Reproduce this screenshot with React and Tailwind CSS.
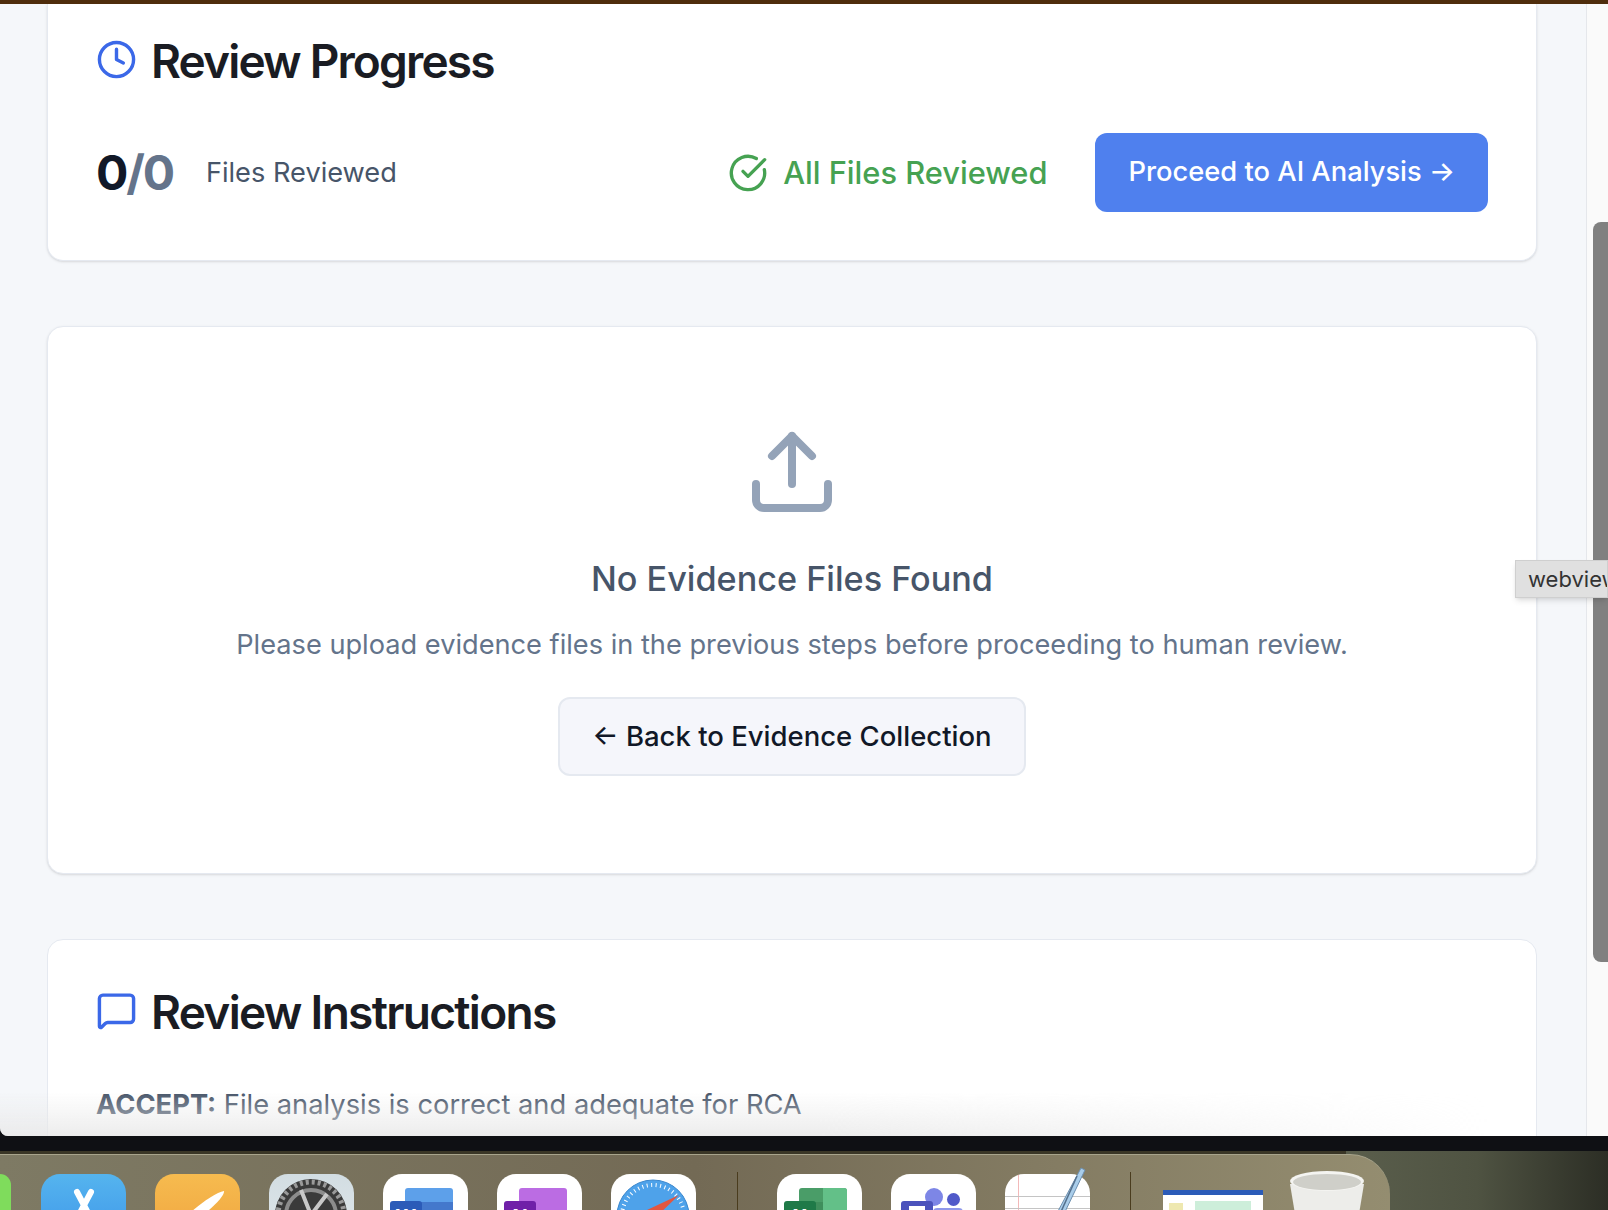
import { Clock, CircleCheckBig, Upload, MessageSquare } from 'lucide-react'

const sans = { fontFamily: 'Inter, sans-serif' }

function DockTile({ className = 'bg-white', children }) {
  return (
    <div className={`w-[85px] h-[85px] shrink-0 rounded-[19px] overflow-hidden relative ${className}`}>
      {children}
    </div>
  )
}

// Word / OneNote / Excel share the same tile: sheet behind, letter block in front
function OfficeIcon({ top, bottom, side, front, letter }) {
  return (
    <DockTile>
      <div className="absolute left-[22px] top-[14px] w-[48px] h-[50px] rounded-[3px] overflow-hidden" style={{ background: top }}>
        <div className="absolute left-0 right-0 top-[14px] bottom-0" style={{ background: bottom }} />
        {side && <div className="absolute left-[24px] right-0 top-0 bottom-0" style={{ background: side }} />}
      </div>
      <div className="absolute left-[7px] top-[27px] w-[32px] h-[32px] rounded-[3px] text-white text-[20px] font-bold leading-[32px] text-center" style={{ background: front }}>
        {letter}
      </div>
    </DockTile>
  )
}

function Dock() {
  return (
    <div className="h-[59px] bg-[#3a3626] overflow-hidden relative shrink-0">
      <div className="absolute inset-y-0 right-0 w-[262px] bg-gradient-to-r from-[#5a5e4c] via-[#4f5342] to-[#2c2e25]" />
      <div className="h-[56px] mt-[3px] w-[1390px] rounded-tr-[40px] border-t border-[#a8a48c] bg-gradient-to-r from-[#7e7a64] via-[#736a55] to-[#948d70] pt-[19px] flex relative">
        <div className="w-[11px] h-[85px] rounded-r-[12px] bg-[#7fdc5c] shrink-0" />
        <div className="ml-[30px] flex gap-[29px]">
          <DockTile className="bg-gradient-to-b from-[#55b4ee] to-[#3a8fe8]">
            <svg viewBox="0 0 85 85" className="absolute inset-0 w-full h-full">
              <path d="M36 18 L54 52 M50 18 L32 52" stroke="#fff" strokeWidth="6" strokeLinecap="round" />
            </svg>
          </DockTile>
          <DockTile className="bg-gradient-to-b from-[#f6bb4f] to-[#ee9f3b]">
            <svg viewBox="0 0 85 85" className="absolute inset-0 w-full h-full">
              <path d="M69 17 C70 22 54 38 40 46 L34 40 C44 30 62 18 69 17 Z" fill="#fff" />
            </svg>
          </DockTile>
          <DockTile className="bg-gradient-to-b from-[#d2dde2] to-[#e4eaed]">
            <svg viewBox="0 0 85 85" className="absolute inset-0 w-full h-full">
              <circle cx="42" cy="41" r="36" fill="#3a3a3a" />
              <circle cx="42" cy="41" r="33" fill="none" stroke="#9a9a9a" strokeWidth="5" strokeDasharray="3 3" />
              <circle cx="42" cy="41" r="25" fill="none" stroke="#8c8c8c" strokeWidth="4" />
              <path d="M42 41 L32 16 M42 41 L58 20" stroke="#c8c8c8" strokeWidth="4" />
            </svg>
          </DockTile>
          <OfficeIcon top="#5da0ea" bottom="#4478cc" front="#2b5bb8" letter="W" />
          <OfficeIcon top="#bb6ce3" bottom="#bb6ce3" front="#7020a8" letter="N" />
          <DockTile>
            <svg viewBox="0 0 85 85" className="absolute inset-0 w-full h-full">
              <circle cx="42" cy="42" r="36" fill="#4ea2ea" stroke="#3a86cc" strokeWidth="1" />
              <circle cx="42" cy="42" r="31" fill="none" stroke="#fff" strokeWidth="4" strokeDasharray="1 3.5" />
              <path d="M68 21 L36 36 L44 44 Z" fill="#e2563f" />
            </svg>
          </DockTile>
        </div>
        <div className="ml-[41px] w-px h-[40px] mt-[-2px] bg-[#4a3c1e] shrink-0" />
        <div className="ml-[39px] flex gap-[29px]">
          <OfficeIcon top="#4a9d68" bottom="#3f8f5c" side="#63c088" front="#1f7a48" letter="X" />
          <DockTile>
            <div className="absolute left-[34px] top-[14px] w-[18px] h-[18px] rounded-full bg-[#7d86e6]" />
            <div className="absolute left-[56px] top-[19px] w-[13px] h-[13px] rounded-full bg-[#5059c9]" />
            <div className="absolute left-[42px] top-[34px] w-[30px] h-[30px] rounded-[4px] bg-[#8f97ea]" />
            <div className="absolute left-[10px] top-[27px] w-[32px] h-[32px] rounded-[3px] bg-[#4b53bc] pt-[5px] pl-[8px]">
              <div className="w-[16px] h-[8px] bg-white" />
            </div>
          </DockTile>
          <div className="w-[85px] h-[85px] shrink-0 relative">
            <div className="absolute inset-0 rounded-[19px] bg-white overflow-hidden">
              <div className="absolute left-[13px] inset-y-0 w-px bg-[#f3b9b9]" />
              <div className="absolute inset-x-0 top-[22px] h-px bg-[#c4c4c4]" />
              <div className="absolute inset-x-0 top-[34px] h-px bg-[#c4c4c4]" />
            </div>
            <svg viewBox="0 0 85 60" className="absolute left-0 top-[-10px] w-[85px] h-[60px] overflow-visible">
              <path d="M76 4 L80 6 L58 52 L52 49 Z" fill="#a9cdea" stroke="#6d8fae" strokeWidth="1" />
              <path d="M72 12 L55 50" stroke="#54708c" strokeWidth="1.5" />
            </svg>
          </div>
        </div>
        <div className="ml-[40px] w-px h-[40px] mt-[-2px] bg-[#4a3c1e] shrink-0" />
        <div className="ml-[32px] w-[100px] h-[60px] mt-[16px] bg-white shrink-0 border-t-[5px] border-[#2b5bb8] flex">
          <div className="w-[14px] mt-[8px] ml-[6px] h-[14px] bg-[#eee8b0]" />
          <div className="ml-[12px] mt-[6px] w-[56px] h-[14px] bg-[#cdeeda]" />
        </div>
        <svg viewBox="0 0 76 56" className="ml-[26px] mt-[-4px] w-[76px] h-[56px] shrink-0">
          <path d="M1 14 L8 56 L68 56 L75 14 Z" fill="#ededea" />
          <ellipse cx="38" cy="11" rx="37" ry="10" fill="#f4f4f1" />
          <ellipse cx="38" cy="12" rx="34" ry="8" fill="#cfcfc9" />
        </svg>
      </div>
    </div>
  )
}

export default function App() {
  return (
    <div className="h-screen w-full bg-[#0f1014] flex flex-col overflow-hidden" style={sans}>
      <div className="h-1 bg-[#4f2d0c] shrink-0" />
      <div className="h-[1132px] shrink-0 flex overflow-hidden rounded-bl-[8px] relative bg-[#f5f7fa]">
        <main className="flex-1 min-w-0 pl-[47px] pr-[49px] overflow-hidden flex flex-col gap-[65px]">
          {/* Review Progress */}
          <section className="shrink-0 bg-white rounded-b-[16px] border-x border-b border-[#e5e9f0] shadow-sm pl-[48px] pr-[48px] h-[257px]">
            <div className="flex items-center gap-[14px] pt-[27px]">
              <Clock size={41} strokeWidth={2} className="text-[#3b68e8] shrink-0 mb-[3px]" />
              <h2 className="text-[46px] font-semibold tracking-[-0.04em] leading-[60px] text-[#1a1c23]">Review Progress</h2>
            </div>
            <div className="flex items-center justify-between mt-[42px]">
              <div className="flex items-center gap-[33px]">
                <div className="text-[48px] font-bold tracking-[-0.045em] leading-none text-[#111827]">
                  0<span className="text-[#64748b]">/0</span>
                </div>
                <span className="text-[27.2px] text-[#475569]">Files Reviewed</span>
              </div>
              <div className="flex items-center gap-[48px]">
                <div className="flex items-center gap-[15px] text-[#46a252]">
                  <CircleCheckBig size={40} />
                  <span className="text-[30.8px] font-medium">All Files Reviewed</span>
                </div>
                <button className="h-[79px] mb-px px-[33px] rounded-[12px] bg-[#4f80ee] text-white text-[27.3px] font-medium">
                  Proceed to AI Analysis →
                </button>
              </div>
            </div>
          </section>

          {/* Empty state */}
          <section className="shrink-0 h-[548px] bg-white rounded-[16px] border border-[#e5e9f0] shadow-sm flex flex-col items-center pt-[97px]">
            <Upload size={96} strokeWidth={2} className="text-[#94a3b8]" />
            <h3 className="mt-[32px] text-[34.2px] leading-[54px] font-medium text-[#475569]">No Evidence Files Found</h3>
            <p className="mt-[18px] text-[27.2px] leading-[42px] text-[#64748b]">Please upload evidence files in the previous steps before proceeding to human review.</p>
            <button className="mt-[31px] h-[79px] px-[32px] rounded-[12px] border-2 border-[#e5e9f0] bg-[#f5f6fb] text-[27.5px] font-medium text-[#111827]">
              ← Back to Evidence Collection
            </button>
          </section>

          {/* Review Instructions */}
          <section className="shrink-0 h-[400px] bg-white rounded-t-[16px] border border-[#e5e9f0] pl-[48px] pr-[48px] pt-[42px]">
            <div className="flex items-center gap-[14px]">
              <MessageSquare size={41} strokeWidth={2} className="text-[#3b68e8] shrink-0 mb-[3px]" />
              <h2 className="text-[46px] font-semibold tracking-[-0.037em] leading-[60px] text-[#1a1c23]">Review Instructions</h2>
            </div>
            <p className="mt-[42px] text-[27.3px] leading-[42px] text-[#475569]">
              <strong className="font-bold">ACCEPT:</strong> File analysis is correct and adequate for RCA
            </p>
          </section>
        </main>

        {/* Scrollbar */}
        <div className="w-[22px] shrink-0 border-l border-[#e5e7eb] bg-[#fafafa] pl-[6px] pt-[218px]">
          <div className="w-full h-[740px] bg-[#808080] rounded-l-[8px]" />
        </div>

        {/* Fade at the window's bottom edge */}
        <div className="absolute left-0 right-[120px] bottom-0 h-[44px] bg-gradient-to-b from-transparent to-[#e8e8e8]/80 pointer-events-none [mask-image:linear-gradient(to_right,black_55%,transparent)]" />

        {/* Hover tooltip */}
        <div className="absolute right-0 top-[556px] w-[93px] h-[38px] bg-[#e0e0e0] border border-[#cfcfcf] shadow-md pl-[12px] text-[22px] leading-[36px] text-[#333] overflow-hidden whitespace-nowrap">
          webview
        </div>
      </div>
      <div className="h-[15px] bg-[#0f1014] shrink-0" />
      <Dock />
    </div>
  )
}
